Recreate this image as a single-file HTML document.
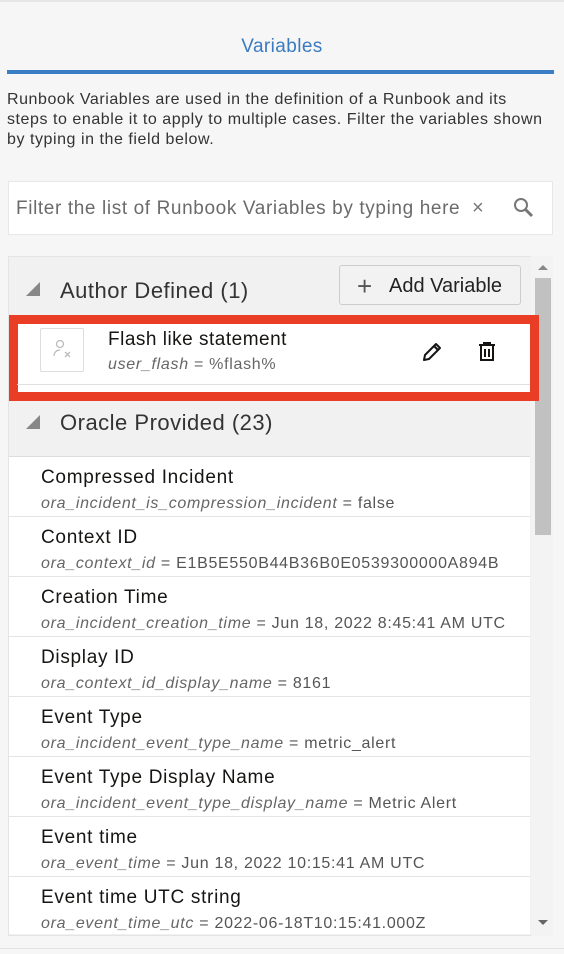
<!DOCTYPE html>
<html><head><style>
*{box-sizing:border-box;margin:0;padding:0}
body{width:564px;height:954px;background:#f6f6f6;font-family:"Liberation Sans",sans-serif;position:relative;overflow:hidden;color:#161513}
.a{position:absolute}
.row{position:absolute;left:9px;width:521px;height:60px;background:#fff;border-bottom:1px solid #e4e4e4}
.row .t{position:absolute;left:32px;top:10px;font-size:19px;letter-spacing:0.7px;color:#161513;white-space:nowrap}
.row .s{position:absolute;left:32px;top:38px;font-size:16px;letter-spacing:0.7px;color:#555;white-space:nowrap}
.row .s i{color:#666}
</style></head><body>
<div class="a" style="left:0;top:0;width:564px;height:2px;background:#e6e6e6"></div>
<div class="a" style="left:0;top:36px;width:564px;text-align:center;font-size:19px;letter-spacing:0.4px;color:#3a7bbf;padding-left:0">Variables</div>
<div class="a" style="left:7px;top:70px;width:547px;height:4px;background:#3a7fc6"></div>
<div class="a" style="left:7px;top:90px;white-space:nowrap;font-size:16px;letter-spacing:0.55px;line-height:20px;color:#333">Runbook Variables are used in the definition of a Runbook and its<br>steps to enable it to apply to multiple cases. Filter the variables shown<br>by typing in the field below.</div>
<div class="a" style="left:8px;top:181px;width:545px;height:54px;background:#fff;border:1px solid #e8e8e8"></div>
<div class="a" style="left:16px;top:198px;font-size:19px;letter-spacing:0.62px;color:#6b6b6b;white-space:nowrap">Filter the list of Runbook Variables by typing here</div>
<div class="a" style="left:472px;top:197px;font-size:20px;color:#777">×</div>
<svg class="a" style="left:512px;top:196px" width="26" height="26" viewBox="0 0 26 26"><circle cx="9" cy="9" r="6" fill="none" stroke="#777" stroke-width="2"/><path d="M13.5 13.5L20 20" stroke="#777" stroke-width="3"/></svg>
<div class="a" style="left:8px;top:256px;width:545px;height:680px;background:#f1f1f1;border:1px solid #e4e4e4"></div>
<div class="a" style="left:531px;top:256px;width:22px;height:680px;background:#f3f3f3"></div>
<div class="a" style="left:535px;top:278px;width:16px;height:257px;background:#c1c1c1"></div>
<div class="a" style="left:538px;top:265px;width:0;height:0;border-left:5px solid transparent;border-right:5px solid transparent;border-bottom:5px solid #888"></div>
<div class="a" style="left:538px;top:920px;width:0;height:0;border-left:5px solid transparent;border-right:5px solid transparent;border-top:5px solid #666"></div>
<svg class="a" style="left:25px;top:281px" width="16" height="16"><path d="M15 1V15H1Z" fill="#888"/></svg>
<div class="a" style="left:60px;top:278px;font-size:22px;letter-spacing:0.5px;color:#333">Author Defined (1)</div>
<div class="a" style="left:339px;top:265px;width:182px;height:40px;background:#f2f2f2;border:1px solid #ccc;border-radius:3px"></div>
<div class="a" style="left:357px;top:271px;font-size:26px;color:#555;font-weight:300">+</div>
<div class="a" style="left:389px;top:275px;font-size:20px;color:#222">Add Variable</div>
<div class="a" style="left:9px;top:315px;width:530px;height:86px;border:9px solid #e93d26;background:#fff"></div>
<div class="a" style="left:17px;top:384px;width:513px;height:1px;background:#e0e0e0"></div>
<div class="a" style="left:40px;top:328px;width:44px;height:44px;border:1px solid #ddd;border-radius:2px"></div>
<svg class="a" style="left:52px;top:338px" width="24" height="24"><circle cx="8" cy="6" r="3.5" fill="none" stroke="#bbb" stroke-width="1.3"/><path d="M2 18c0-4 3-6 6-6" fill="none" stroke="#bbb" stroke-width="1.3"/><path d="M13 14l5 5M18 14l-5 5" stroke="#bbb" stroke-width="1.3"/></svg>
<div class="a" style="left:108px;top:329px;font-size:19px;letter-spacing:0.5px;color:#161513">Flash like statement</div>
<div class="a" style="left:108px;top:356px;font-size:16px;letter-spacing:0.7px;color:#666"><i>user_flash</i> = %flash%</div>
<svg class="a" style="left:420px;top:340px" width="24" height="24" viewBox="0 0 24 24"><path d="M4 20l1-5L16 4l4 4L9 19z" fill="none" stroke="#161513" stroke-width="2" stroke-linejoin="round"/><path d="M14 6l4 4" stroke="#161513" stroke-width="2"/></svg>
<svg class="a" style="left:475px;top:340px" width="24" height="24" viewBox="0 0 24 24"><path d="M4 5h16M9 5V3h6v2M6 5v15h12V5" fill="none" stroke="#161513" stroke-width="2"/><path d="M10 9v8M14 9v8" stroke="#161513" stroke-width="2"/></svg>
<svg class="a" style="left:25px;top:414px" width="16" height="16"><path d="M15 1V15H1Z" fill="#888"/></svg>
<div class="a" style="left:60px;top:410px;font-size:22px;letter-spacing:0.5px;color:#333">Oracle Provided (23)</div>
<div class="a" style="left:9px;top:456px;width:521px;height:1px;background:#ddd"></div>
<div class="row" style="top:457px"><div class="t">Compressed Incident</div><div class="s"><i>ora_incident_is_compression_incident</i> = false</div></div>
<div class="row" style="top:517px"><div class="t">Context ID</div><div class="s"><i>ora_context_id</i> = E1B5E550B44B36B0E0539300000A894B</div></div>
<div class="row" style="top:577px"><div class="t">Creation Time</div><div class="s"><i>ora_incident_creation_time</i> = Jun 18, 2022 8:45:41 AM UTC</div></div>
<div class="row" style="top:637px"><div class="t">Display ID</div><div class="s"><i>ora_context_id_display_name</i> = 8161</div></div>
<div class="row" style="top:697px"><div class="t">Event Type</div><div class="s"><i>ora_incident_event_type_name</i> = metric_alert</div></div>
<div class="row" style="top:757px"><div class="t">Event Type Display Name</div><div class="s"><i>ora_incident_event_type_display_name</i> = Metric Alert</div></div>
<div class="row" style="top:817px"><div class="t">Event time</div><div class="s"><i>ora_event_time</i> = Jun 18, 2022 10:15:41 AM UTC</div></div>
<div class="row" style="top:877px;height:57px;border:none"><div class="t">Event time UTC string</div><div class="s"><i>ora_event_time_utc</i> = 2022-06-18T10:15:41.000Z</div></div>
<div class="a" style="left:0;top:948px;width:564px;height:1px;background:#e2e2e2"></div>
</body></html>
